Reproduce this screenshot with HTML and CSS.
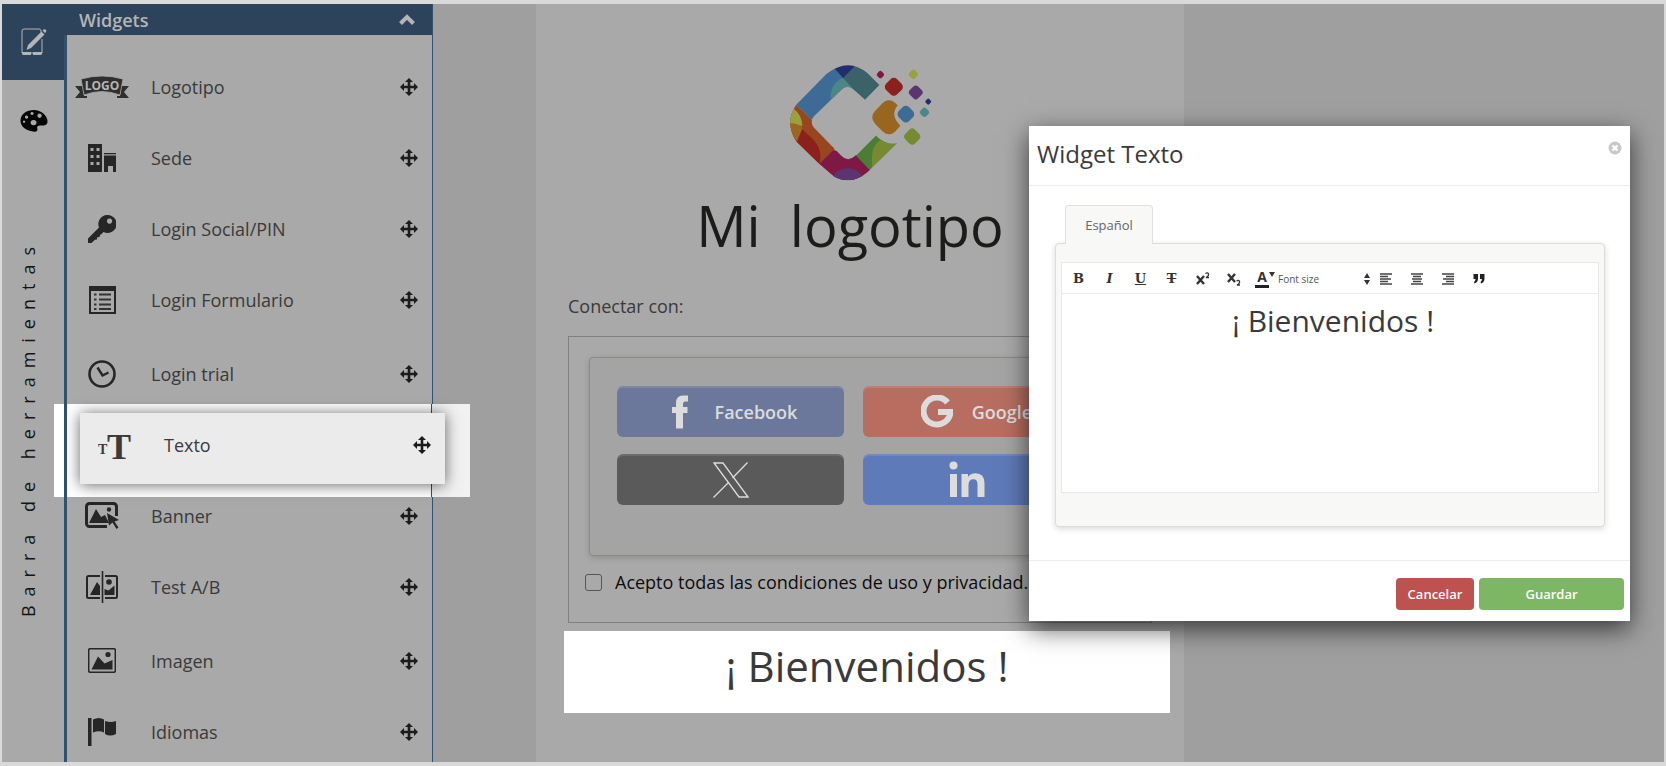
FILE: index.html
```html
<!DOCTYPE html>
<html lang="es">
<head>
  <meta charset="UTF-8" />
  <meta name="viewport" content="width=device-width, initial-scale=1.0"/>
  <title>Editor de portal - Widgets</title>
  <link rel="stylesheet" href="styles.css">
</head>
<body>
  <!-- Iconos compartidos -->
  <svg class="sprite" aria-hidden="true">
    <symbol id="move" viewBox="0 0 18 18">
      <path d="M9 0l4 4h-2.700v3.700H14V5l4 4-4 4v-2.700h-3.700V14H13l-4 4-4-4h2.700v-3.700H4V13L0 9l4-4v2.700h3.700V4H5z"/>
    </symbol>
  </svg>

  <div class="app">
    <nav class="rail">
      <button class="rail-button active" aria-label="Editar">
        <svg width="28" height="28" viewBox="-2 0 28 28">
          <path d="M20 4.500V3a2 2 0 0 0-2-2H3a2 2 0 0 0-2 2v22h20V11" fill="none" stroke="#b5b5b5" stroke-width="1"/>
          <path d="M1 24h9v3H2.500Q1 27 1 25.500zM12 24h9v1.500q0 1.500-1.500 1.500H12z" fill="#b5b5b5"/>
          <path d="M7 17L20.500 3.500l3 3L10 20l-4.500 2zM21.500 2.500l1-1q1.200-.8 2.300.2t.2 2.300l-1 1z" fill="#b5b5b5"/>
        </svg>
      </button>
      <button class="rail-button colors" aria-label="Colores">
        <svg width="28" height="24" viewBox="0 0 28 24">
          <path fill="#050505" fill-rule="evenodd" d="M14 1C21 1 27 6 27.500 12c.2 4-3 5-6 4.500-3-.4-5 .5-4.200 3C18 22 16 23.500 13 22.500 6 21.500.5 18 .5 11.500S7 1 14 1zM6.500 6.500a1.600 1.600 0 1 0 .1 0zM12 2.900a1.600 1.600 0 1 0 .1 0zM19.500 4.500a2.200 2.200 0 1 0 .1 0zM4 11.500a1.200 1.200 0 1 0 .1 0zM13.500 11a3 2.600 0 1 0 .1 0z"/>
        </svg>
      </button>
      <span class="rail-title">Barra de herramientas</span>
    </nav>

    <aside class="panel">
      <header class="panel-header">
        <h2>Widgets</h2>
        <button class="collapse" aria-label="Contraer">
          <svg width="16" height="11" viewBox="0 0 16 11"><path d="M1.500 9.500L8 3l6.500 6.500" fill="none" stroke="#b5b5b5" stroke-width="4"/></svg>
        </button>
      </header>

      <div class="widgets">
        <ul>
          <li class="widget">
            <span class="widget-icon">
              <svg width="56" height="24" viewBox="0 0 56 24">
                <path fill="#2f2f2f" d="M1 11h8l1 10h3v2H1l5-6zM55 11h-8l-1 10h-3v2h12l-5-6z"/>
                <path fill="#2f2f2f" stroke="#a9a9a9" stroke-width=".8" d="M7 4Q28-2 49 4L46 20Q28 13 10 20z"/>
                <text x="28" y="15" text-anchor="middle" class="ribbon-text">LOGO</text>
              </svg>
            </span>
            <span class="widget-name">Logotipo</span>
            <svg class="move"><use href="#move"/></svg>
          </li>
          <li class="widget">
            <span class="widget-icon">
              <svg width="28" height="28" viewBox="0 0 28 28">
                <path fill="#262626" fill-rule="evenodd" d="M0 0h14v28H0zM2.500 4h3v3h-3zM8.500 4h3v3h-3zM2.500 11h3v3h-3zM8.500 11h3v3h-3zM2.500 18h3v3h-3zM8.500 18h3v3h-3zM16 9h12v1.200H16zM16 11.500h12V28h-3v-6h-5v6h-4z"/>
              </svg>
            </span>
            <span class="widget-name">Sede</span>
            <svg class="move"><use href="#move"/></svg>
          </li>
          <li class="widget">
            <span class="widget-icon">
              <svg width="28" height="28" viewBox="0 0 28 28">
                <path fill="#262626" fill-rule="evenodd" d="M19 0a9 9 0 1 1-3.500 17L13 19.500l-1 .2-.3 2.300-2.500.3-.3 2.200-2 .3L3.500 28H0v-4.500L11 12.500A9 9 0 0 1 19 0zM21.500 3.500a2.600 2.600 0 1 0 .1 0z"/>
              </svg>
            </span>
            <span class="widget-name">Login Social/PIN</span>
            <svg class="move"><use href="#move"/></svg>
          </li>
          <li class="widget">
            <span class="widget-icon">
              <svg width="28" height="28" viewBox="0 0 28 28">
                <path fill="#262626" fill-rule="evenodd" d="M1 0h27v28H1zM3 5v21h23V5z"/>
                <path stroke="#333" stroke-width="2" d="M6 8.500h2.500M6 13.500h2.500M6 18.500h2.500M6 23h2.500M11 8.500h12M11 13.500h12M11 18.500h12M11 23h12"/>
              </svg>
            </span>
            <span class="widget-name">Login Formulario</span>
            <svg class="move"><use href="#move"/></svg>
          </li>
        </ul>
        <ul>
          <li class="widget">
            <span class="widget-icon">
              <svg width="28" height="28" viewBox="0 0 28 28">
                <circle cx="14" cy="14" r="12.500" fill="none" stroke="#262626" stroke-width="2.600"/>
                <path d="M9.500 7.500l5 8 6-3" fill="none" stroke="#262626" stroke-width="2.400"/>
              </svg>
            </span>
            <span class="widget-name">Login trial</span>
            <svg class="move"><use href="#move"/></svg>
          </li>
          <li class="widget dragging">
            <span class="widget-icon">
              <svg width="34" height="30" viewBox="0 0 34 30">
                <text x="9" y="29" class="text-big">T</text>
                <text x="0" y="24" class="text-small">T</text>
              </svg>
            </span>
            <span class="widget-name">Texto</span>
            <svg class="move"><use href="#move"/></svg>
          </li>
          <li class="widget">
            <span class="widget-icon">
              <svg width="34" height="28" viewBox="0 0 34 28">
                <path d="M22 24.500H4.500a3 3 0 0 1-3-3v-17a3 3 0 0 1 3-3h24a3 3 0 0 1 3 3V14" fill="none" stroke="#262626" stroke-width="3"/>
                <path d="M4 21l7-14 5 8 4-2 4 8z" fill="#262626"/>
                <circle cx="24" cy="7.500" r="2.200" fill="#262626"/>
                <path d="M22 11l12 7-4.500 1.500 4 6-2 1.500-4-6.500-3.500 3z" fill="#262626"/>
              </svg>
            </span>
            <span class="widget-name">Banner</span>
            <svg class="move"><use href="#move"/></svg>
          </li>
          <li class="widget">
            <span class="widget-icon">
              <svg width="32" height="32" viewBox="0 0 32 32">
                <path d="M14 5H2.500Q1 5 1 6.500v19Q1 27 2.500 27H14M19 5h10.500Q31 5 31 6.500v19q0 1.500-1.500 1.500H19" fill="none" stroke="#262626" stroke-width="2"/>
                <path d="M16.500 0v32" stroke="#262626" stroke-width="1.600"/>
                <path d="M4 24l7-13 3 4v9zM18.500 24v-6l4 1.500 6-5V24z" fill="#262626"/>
                <circle cx="23" cy="11" r="2.800" fill="#262626"/>
              </svg>
            </span>
            <span class="widget-name">Test A/B</span>
            <svg class="move"><use href="#move"/></svg>
          </li>
        </ul>
        <ul>
          <li class="widget">
            <span class="widget-icon">
              <svg width="28" height="25" viewBox="0 0 28 25">
                <rect x=".7" y=".7" width="26.600" height="23.600" rx="1.500" fill="none" stroke="#262626" stroke-width="1.500"/>
                <path d="M3.500 21.500l6.500-13 6.500 7L24.500 12v9.500z" fill="#262626"/>
                <circle cx="20" cy="6.500" r="2.600" fill="#262626"/>
              </svg>
            </span>
            <span class="widget-name">Imagen</span>
            <svg class="move"><use href="#move"/></svg>
          </li>
          <li class="widget">
            <span class="widget-icon">
              <svg width="28" height="28" viewBox="0 0 28 28">
                <path fill="#262626" d="M0 0h3.500v28H0zM5 1.500Q11-1.500 16 1.500v13q-5-2.500-11 0zM17 3q6 2 11 0v13q-6 3-11 0z"/>
              </svg>
            </span>
            <span class="widget-name">Idiomas</span>
            <svg class="move"><use href="#move"/></svg>
          </li>
        </ul>
      </div>
    </aside>

    <main class="workspace">
      <section class="canvas">
        <div class="brand">
          <svg width="160" height="140" viewBox="0 0 480 420" role="img" aria-label="Logotipo">
            <defs>
              <clipPath id="ring">
                <path d="M298 90L255 134 222 104Q202 87 184 104L102 184Q88 200 102 218L184 302Q203 322 224 304L288 242Q318 272 352 264L264 350Q203 402 142 350L50 260Q12 205 48 150L140 56Q205 6 262 54Z"/>
              </clipPath>
            </defs>
            <g clip-path="url(#ring)">
              <path fill="#3d6b96" d="M40 142L95 194 230 110 150 20z"/>
              <path fill="#4b8786" d="M190 68Q150 85 152 130L190 140 250 110z"/>
              <path fill="#3a6268" d="M190 70L228 28H310V140H255z"/>
              <path fill="#222d70" d="M150 25H228L222 36 190 70z"/>
              <path fill="#98461f" d="M40 142L95 194 170 276 118 330 20 260V142z"/>
              <path fill="#8c201d" d="M62 218L98 252Q130 284 118 328L20 240z"/>
              <path fill="#99a13c" d="M42 162Q66 180 67 213L20 205V150z"/>
              <path fill="#9a6720" d="M28 205Q50 203 68 218L50 262H10z"/>
              <path fill="#7f1844" d="M160 285L230 300 276 350 203 400 118 327z"/>
              <ellipse cx="203" cy="376" rx="46" ry="36" fill="#5b3570"/>
              <path fill="#4b7e35" d="M228 302L292 236 330 260 270 346z"/>
              <path fill="#778a31" d="M300 256Q270 275 277 333L270 350 370 270V250z"/>
            </g>
            <path fill="#99651f" d="M309 143Q327 129 345 143L353 151Q329 181 361 212L345 230Q327 245 309 230L285 206Q268 187 285 168z"/>
            <g transform="rotate(45)">
              <rect x="286" y="-197" width="46" height="46" rx="13" fill="#8c201d"/>
              <rect x="350" y="-226" width="35" height="35" rx="10" fill="#5b3570"/>
              <rect x="371" y="-163" width="43" height="43" rx="13" fill="#3d6b96"/>
              <rect x="433" y="-128" width="41" height="41" rx="12" fill="#778a31"/>
              <rect x="312" y="-254" width="24" height="24" rx="7" fill="#99a13c"/>
              <rect x="245" y="-181" width="19" height="19" rx="6" fill="#7f1844"/>
              <rect x="406" y="-223" width="15" height="15" rx="4" fill="#222d70"/>
              <rect x="416" y="-197" width="24" height="24" rx="7" fill="#4b8786"/>
            </g>
          </svg>
          <h1>Mi  logotipo</h1>
        </div>

        <p class="connect">Conectar con:</p>

        <form class="login-box">
          <div class="social">
            <button type="button" class="social-button facebook">
              <svg width="32" height="34" viewBox="0 0 32 34"><path fill="#dcdcdc" d="M24 .5v6h-3q-2 0-2 2.500V12h4.500v6H19v15.500h-7V18H8v-6h4V8q0-7.500 7-7.500z"/></svg>
              Facebook
            </button>
            <button type="button" class="social-button google">
              <svg width="32" height="34" viewBox="0 0 32 34"><path d="M26.500 7.500A13.500 13.500 0 1 0 29.500 17H17" fill="none" stroke="#dcdcdc" stroke-width="6"/></svg>
              Google
            </button>
            <button type="button" class="social-button twitter" aria-label="X">
              <svg width="36" height="36" viewBox="0 0 36 36" fill="none" stroke="#dcdcdc" stroke-width="1.300"><path d="M1 1h9l25 34h-9zM34.500.5L19.500 16M15.500 20.500L.5 35.500"/></svg>
            </button>
            <button type="button" class="social-button linkedin" aria-label="LinkedIn">
              <svg width="36" height="38" viewBox="0 0 36 38" fill="#dcdcdc"><circle cx="4.500" cy="4.500" r="4"/><path d="M1 13h7v23H1zM12.500 13h6.500v3q2.500-3.700 7.500-3.700 9 0 9 10.200V36h-7V23.500q0-5.300-4-5.300-5 0-5 5.800v12h-7z"/></svg>
            </button>
          </div>
          <label class="terms"><input type="checkbox"> Acepto todas las condiciones de uso y privacidad.</label>
        </form>

        <p class="welcome">¡ Bienvenidos !</p>
      </section>
    </main>

    <div class="modal" role="dialog" aria-labelledby="modal-title">
      <header class="modal-header">
        <h3 id="modal-title">Widget Texto</h3>
        <button class="close" aria-label="Cerrar">
          <svg width="14" height="14" viewBox="0 0 14 14"><circle cx="7" cy="7" r="6.500" fill="#c9c9c9"/><path d="M4.500 4.500l5 5m0-5l-5 5" stroke="#fff" stroke-width="2.200"/></svg>
        </button>
      </header>

      <div class="modal-body">
        <button class="tab">Español</button>
        <div class="tab-panel">
          <div class="editor">
            <div class="toolbar">
              <button aria-label="Negrita"><b>B</b></button>
              <button aria-label="Cursiva"><i>I</i></button>
              <button aria-label="Subrayado"><u>U</u></button>
              <button aria-label="Tachado"><s>T</s></button>
              <button aria-label="Superíndice">
                <svg width="14" height="14" viewBox="0 0 14 14" fill="none" stroke="#333"><path d="M1 4l7 8M8 4l-7 8" stroke-width="2.400"/><path d="M9.500 1.500Q12 0 12.500 2T10 5.500h3" stroke-width="1.300"/></svg>
              </button>
              <button aria-label="Subíndice">
                <svg width="14" height="14" viewBox="0 0 14 14" fill="none" stroke="#333"><path d="M1 2l7 8M8 2l-7 8" stroke-width="2.400"/><path d="M9.500 9Q12 7.500 12.500 9.500T10 13h3" stroke-width="1.300"/></svg>
              </button>
              <button class="color" aria-label="Color de texto"><span>A</span><svg width="6" height="5" viewBox="0 0 6 5"><path d="M0 0h6L3 5z" fill="#333"/></svg></button>
              <span class="size">
                <select aria-label="Font size"><option>Font size</option></select>
                <svg width="6" height="12" viewBox="0 0 6 12"><path d="M0 5l3-5 3 5zM0 7h6l-3 5z" fill="#333"/></svg>
              </span>
              <button aria-label="Alinear a la izquierda">
                <svg width="12" height="12" viewBox="0 0 12 12"><path d="M0 1h12M0 3.500h8M0 6h11M0 8.500h8M0 11h12" stroke="#444" stroke-width="1.400"/></svg>
              </button>
              <button aria-label="Centrar">
                <svg width="12" height="12" viewBox="0 0 12 12"><path d="M0 1h12M2 3.500h8M1 6h10M2 8.500h8M0 11h12" stroke="#444" stroke-width="1.400"/></svg>
              </button>
              <button aria-label="Alinear a la derecha">
                <svg width="12" height="12" viewBox="0 0 12 12"><path d="M0 1h12M4 3.500h8M1 6h11M4 8.500h8M0 11h12" stroke="#444" stroke-width="1.400"/></svg>
              </button>
              <button aria-label="Cita">
                <svg width="12" height="10" viewBox="0 0 12 10"><path d="M.5 0h4.500v4.500Q5 8.500 1.500 9.500L1 8q1.500-1 1.500-3h-2zM7 0h4.500v4.500q0 4-3.500 5L7.500 8Q9 7 9 5H7z" fill="#222"/></svg>
              </button>
            </div>
            <div class="editor-content" contenteditable="true">¡ Bienvenidos !</div>
          </div>
        </div>
      </div>

      <footer class="modal-footer">
        <button class="btn cancel">Cancelar</button>
        <button class="btn save">Guardar</button>
      </footer>
    </div>
  </div>
</body>
</html>
```
FILE: styles.css
```css
:root {
  --blue: #2d435b;
  --blue-line: #33506f;
  --grey-panel: #a9a9a9;
  --grey-back: #9f9f9f;
  --text: #3a3a3a;
}

* {
  box-sizing: border-box;
}

body {
  margin: 0;
  padding: 4px 2px;
  background: #d9d9d9;
  font-family: "Open Sans", "Noto Sans", sans-serif;
  color: var(--text);
}

button {
  font-family: inherit;
  border: none;
  padding: 0;
  background: none;
  cursor: pointer;
}

h1, h2, h3, p, ul {
  margin: 0;
  padding: 0;
  font-weight: normal;
}

.sprite {
  display: none;
}

.app {
  position: relative;
  display: flex;
  height: calc(100vh - 8px);
  overflow: hidden;
  background: var(--grey-back);
}

/* Barra lateral */
.rail {
  display: flex;
  flex-direction: column;
  align-items: center;
  width: 62px;
  background: var(--grey-panel);
}

.rail-button {
  display: flex;
  align-items: center;
  justify-content: center;
  width: 100%;
  height: 76px;
}

.rail-button.active {
  background: var(--blue);
}

.rail-button.colors {
  height: 82px;
  padding-left: 2px;
}

.rail-title {
  margin: 76px 10px 0 0;
  writing-mode: vertical-rl;
  transform: rotate(180deg);
  font-size: 18px;
  font-weight: 500;
  line-height: 24px;
  letter-spacing: 9px;
  white-space: nowrap;
  color: #141414;
}

/* Panel de widgets */
.panel {
  width: 369px;
  border-left: 3px solid var(--blue-line);
  border-right: 1px solid var(--blue-line);
  background: var(--grey-panel);
}

.panel-header {
  display: flex;
  align-items: center;
  justify-content: space-between;
  height: 31px;
  margin-left: -3px;
  padding: 0 17px 0 15px;
  background: var(--blue);
}

.panel-header h2 {
  font-size: 18px;
  font-weight: 600;
  color: #b5b5b5;
}

.collapse {
  display: flex;
}

.widgets {
  display: flex;
  flex-direction: column;
  gap: 3px;
  padding-top: 16px;
}

.widgets ul {
  list-style: none;
}

.widget {
  display: flex;
  align-items: center;
  height: 71px;
  padding: 0 14px 0 7px;
  cursor: move;
}

.widget-icon {
  display: flex;
  justify-content: center;
  width: 56px;
  margin-right: 21px;
}

.widget-name {
  flex: 1;
  font-size: 18px;
}

.move {
  width: 18px;
  height: 18px;
  fill: #1c1c1c;
}

.ribbon-text {
  font-size: 12px;
  font-weight: 700;
  fill: #b5b5b5;
}

.text-big,
.text-small {
  font-family: "Liberation Serif", serif;
  font-weight: 700;
  fill: #3a3a3a;
}

.text-big {
  font-size: 36px;
}

.text-small {
  font-size: 14px;
}

/* Widget que se arrastra hacia el lienzo */
.dragging {
  position: relative;
  left: 13px;
  z-index: 1;
}

.dragging::before,
.dragging::after {
  content: "";
  position: absolute;
  z-index: -1;
}

/* Zona iluminada, con las líneas del panel a la vista */
.dragging::before {
  top: -5px;
  right: -25px;
  bottom: -17px;
  left: -26px;
  background: linear-gradient(to right, #fff 10px, var(--blue-line) 10px 13px, #fff 13px 377px, var(--blue-line) 377px 378px, #f1f1f1 378px);
}

.dragging::after {
  top: 4px;
  right: 0;
  bottom: -4px;
  left: 0;
  background: #ebebeb;
  box-shadow: 0 1px 14px rgba(0, 0, 0, 0.6);
}

/* Lienzo */
.workspace {
  flex: 1;
  padding-left: 103px;
}

.canvas {
  width: 648px;
  max-width: 100%;
  height: 100%;
  padding: 51px 14px 0 28px;
  background: var(--grey-panel);
}

.brand {
  display: flex;
  flex-direction: column;
  align-items: center;
  padding-right: 14px;
}

.brand h1 {
  margin-right: 20px;
  font-size: 56px;
  font-weight: 500;
  line-height: 60px;
  white-space: pre;
  color: #1c1c1a;
}

.connect {
  padding: 37px 4px 16px;
  font-size: 18px;
  line-height: 28px;
}

.login-box {
  width: 584px;
  max-width: 100%;
  margin-left: 4px;
  padding: 20px 20px 18px;
  border: 1px solid #808080;
}

.social {
  display: grid;
  grid-template-columns: 1fr 1fr;
  gap: 17px 19px;
  padding: 28px 40px 50px 27px;
  border: 1px solid #8b8b86;
  border-radius: 4px;
  background: #a4a4a4;
  box-shadow: 0 2px 6px rgba(0, 0, 0, 0.15);
}

.social-button {
  display: flex;
  align-items: center;
  justify-content: center;
  gap: 19px;
  height: 51px;
  border-radius: 6px;
  font-size: 18px;
  font-weight: 600;
  color: #dcdcdc;
  box-shadow: inset 0 2px 1px rgba(255, 255, 255, 0.12);
}

.facebook {
  background: #6b779b;
}

.google {
  background: #b76e60;
}

.twitter {
  background: #5a5a5a;
}

.linkedin {
  padding-right: 20px;
  background: #5f7ab9;
}

.terms {
  display: flex;
  align-items: center;
  gap: 13px;
  margin: 14px 0 10px -4px;
  font-size: 18px;
  line-height: 24px;
  white-space: nowrap;
  color: #0c0c0c;
}

.terms input {
  appearance: none;
  width: 17px;
  height: 17px;
  margin: 0;
  border: 1px solid #555;
  border-radius: 3px;
}

.welcome {
  margin-top: 8px;
  padding: 5px 0 17px;
  background: #fff;
  font-size: 42px;
  line-height: 60px;
  text-align: center;
}

/* Ventana del widget */
.modal {
  position: absolute;
  z-index: 2;
  top: 122px;
  right: 34px;
  width: 601px;
  background: #fff;
  box-shadow: 0 8px 24px rgba(0, 0, 0, 0.65);
}

.modal-header {
  display: flex;
  align-items: flex-start;
  justify-content: space-between;
  padding: 11px 8px 14px;
  border-bottom: 1px solid #eee;
}

.modal-header h3 {
  font-size: 24px;
  line-height: 34px;
}

.close {
  display: flex;
  margin-top: 4px;
}

.modal-body {
  padding: 19px 25px 33px 26px;
}

.tab {
  position: relative;
  z-index: 1;
  display: block;
  width: 88px;
  height: 39px;
  margin: 0 0 -1px 10px;
  border: 1px solid #e0e0dc;
  border-bottom: none;
  border-radius: 4px 4px 0 0;
  background: #f8f8f7;
  font-size: 13px;
  color: #666;
}

.tab-panel {
  padding: 18px 5px 33px;
  border: 1px solid #dcdcd9;
  border-radius: 4px;
  background: #f8f8f7;
  box-shadow: 0 2px 6px rgba(0, 0, 0, 0.15);
}

.editor {
  border: 1px solid #e8e8e8;
  background: #fff;
}

.toolbar {
  display: flex;
  align-items: center;
  height: 31px;
  padding: 1px 0 0 1px;
  border-bottom: 1px solid #ececec;
}

.toolbar button {
  display: flex;
  align-items: center;
  justify-content: center;
  width: 31px;
  height: 24px;
  font-family: "DejaVu Serif", serif;
  font-size: 13px;
  font-weight: 700;
  color: #333;
}

.toolbar .color {
  align-items: flex-start;
  width: 26px;
  height: 20px;
  margin-left: 3px;
}

.color span {
  padding: 0 2px;
  border-bottom: 3px solid #222;
  font-family: "Open Sans", sans-serif;
  font-size: 14px;
  line-height: 16px;
}

.color svg {
  margin-top: 3px;
}

.size {
  display: flex;
  align-items: center;
  width: 92px;
}

.size select {
  flex: 1;
  appearance: none;
  padding: 0;
  border: none;
  background: none;
  font-family: inherit;
  font-size: 10px;
  color: #555;
}

.editor-content {
  height: 198px;
  padding: 6px 0 0 6px;
  font-size: 30px;
  line-height: 42px;
  text-align: center;
  outline: none;
}

.modal-footer {
  display: flex;
  justify-content: flex-end;
  gap: 5px;
  padding: 17px 6px 11px;
  border-top: 1px solid #eee;
}

.btn {
  width: 78px;
  height: 32px;
  border-radius: 4px;
  font-size: 13px;
  font-weight: 600;
  color: #fff;
}

.cancel {
  background: #bd524f;
}

.save {
  width: 145px;
  background: #7eb763;
}
```
